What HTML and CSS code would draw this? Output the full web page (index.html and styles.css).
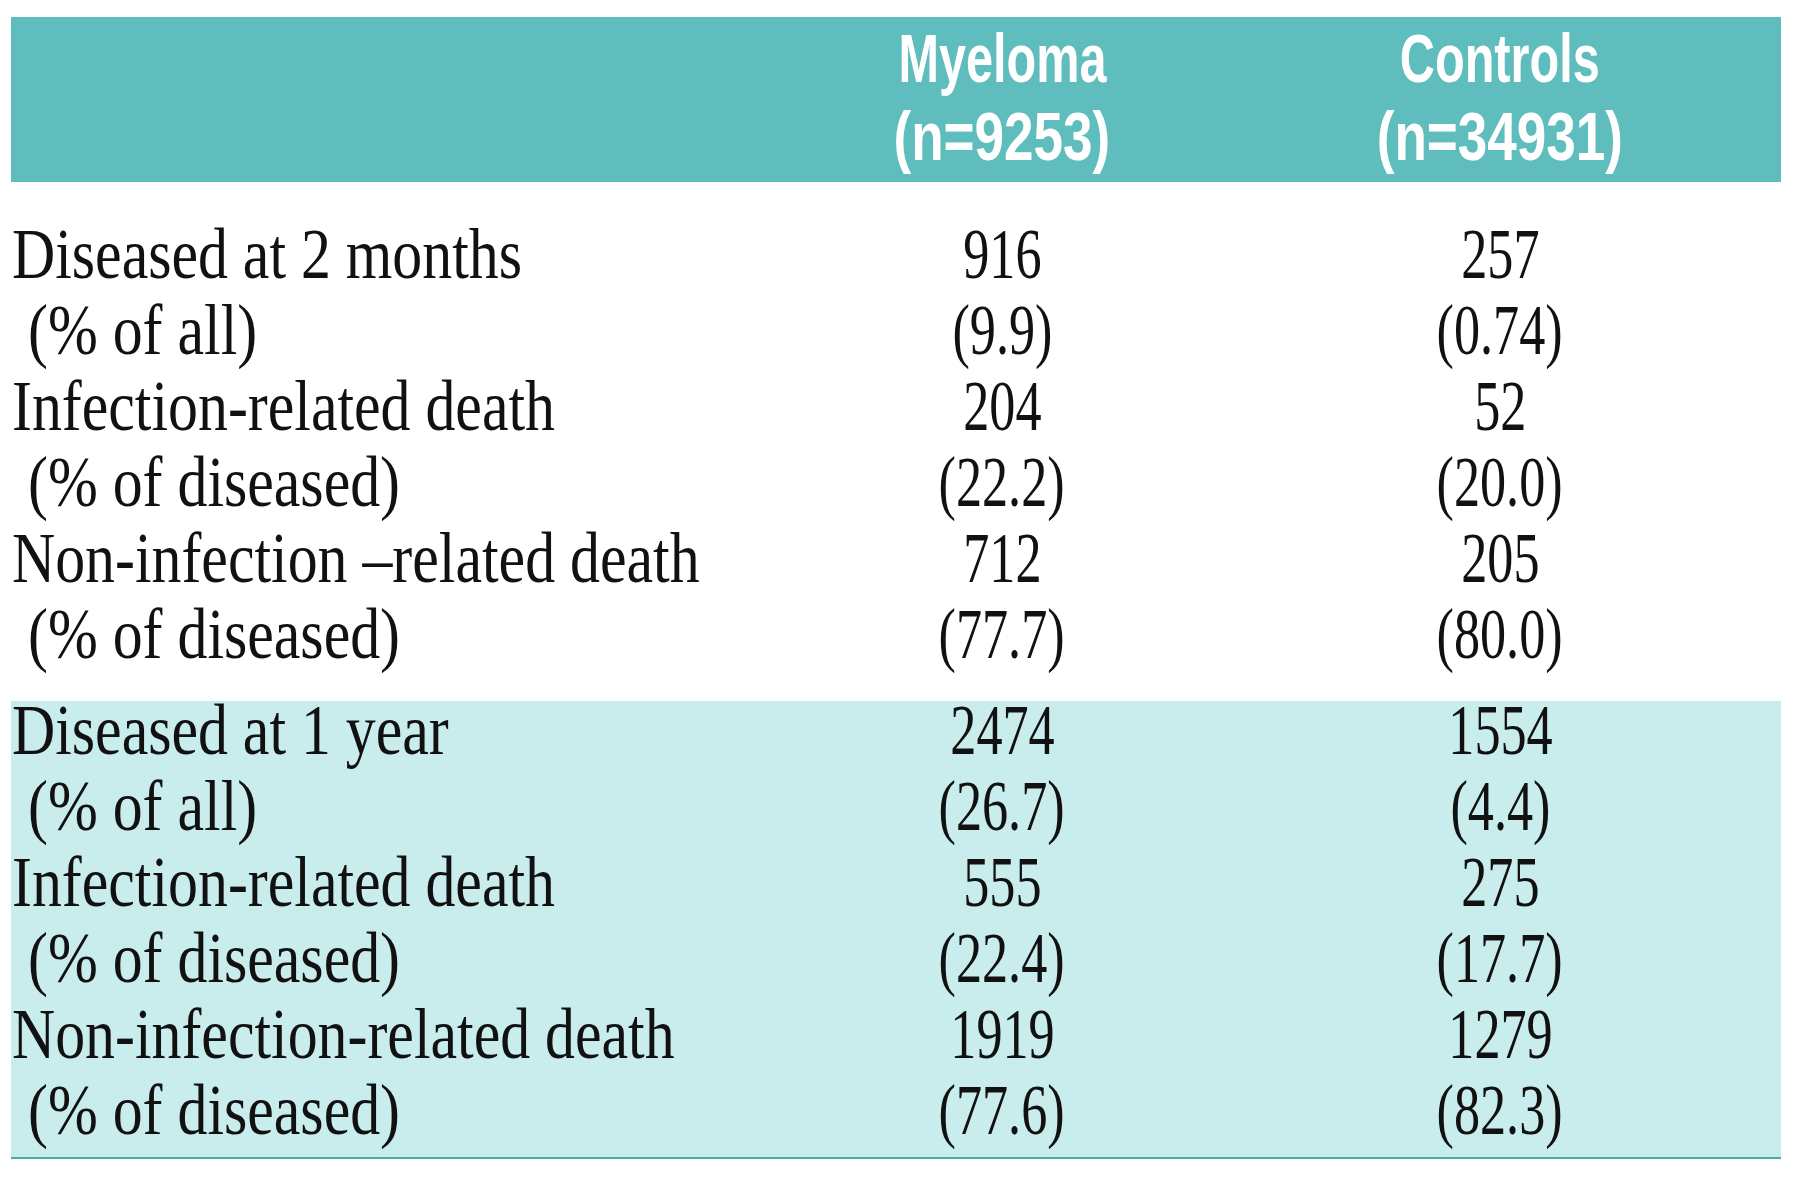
FILE: index.html
```html
<!DOCTYPE html>
<html lang="en">
<head>
<meta charset="utf-8">
<title>Myeloma vs Controls</title>
<link rel="stylesheet" href="styles.css">
</head>
<body>
<div class="table">
  <div class="thead">
    <div class="hcell"></div>
    <div class="hcell">
      <div class="hline"><span class="htext">Myeloma</span></div>
      <div class="hline"><span class="htext count">(n=9253)</span></div>
    </div>
    <div class="hcell">
      <div class="hline"><span class="htext">Controls</span></div>
      <div class="hline"><span class="htext count">(n=34931)</span></div>
    </div>
  </div>

  <div class="section">
    <div class="label"><span class="ltext">Diseased at 2 months</span></div>
    <div class="num"><span class="ntext">916</span></div>
    <div class="num"><span class="ntext">257</span></div>

    <div class="label sub"><span class="ltext">(% of all)</span></div>
    <div class="num"><span class="ntext">(9.9)</span></div>
    <div class="num"><span class="ntext">(0.74)</span></div>

    <div class="label"><span class="ltext">Infection-related death</span></div>
    <div class="num"><span class="ntext">204</span></div>
    <div class="num"><span class="ntext">52</span></div>

    <div class="label sub"><span class="ltext">(% of diseased)</span></div>
    <div class="num"><span class="ntext">(22.2)</span></div>
    <div class="num"><span class="ntext">(20.0)</span></div>

    <div class="label"><span class="ltext">Non-infection –related death</span></div>
    <div class="num"><span class="ntext">712</span></div>
    <div class="num"><span class="ntext">205</span></div>

    <div class="label sub"><span class="ltext">(% of diseased)</span></div>
    <div class="num"><span class="ntext">(77.7)</span></div>
    <div class="num"><span class="ntext">(80.0)</span></div>
  </div>

  <div class="section shaded">
    <div class="label"><span class="ltext">Diseased at 1 year</span></div>
    <div class="num"><span class="ntext">2474</span></div>
    <div class="num"><span class="ntext">1554</span></div>

    <div class="label sub"><span class="ltext">(% of all)</span></div>
    <div class="num"><span class="ntext">(26.7)</span></div>
    <div class="num"><span class="ntext">(4.4)</span></div>

    <div class="label"><span class="ltext">Infection-related death</span></div>
    <div class="num"><span class="ntext">555</span></div>
    <div class="num"><span class="ntext">275</span></div>

    <div class="label sub"><span class="ltext">(% of diseased)</span></div>
    <div class="num"><span class="ntext">(22.4)</span></div>
    <div class="num"><span class="ntext">(17.7)</span></div>

    <div class="label"><span class="ltext">Non-infection-related death</span></div>
    <div class="num"><span class="ntext">1919</span></div>
    <div class="num"><span class="ntext">1279</span></div>

    <div class="label sub"><span class="ltext">(% of diseased)</span></div>
    <div class="num"><span class="ntext">(77.6)</span></div>
    <div class="num"><span class="ntext">(82.3)</span></div>
  </div>
</div>
</body>
</html>
```

FILE: styles.css
```css
html, body {
  margin: 0;
  padding: 0;
  background: #ffffff;
}

.table {
  width: 1770px;
  margin: 17px 0 0 11px;
  color: #111111;
}

.thead {
  display: grid;
  grid-template-columns: 774px 434px 562px;
  height: 165px;
  box-sizing: border-box;
  padding-top: 2px;
  background: #5fbdbd;
}

.hcell {
  text-align: center;
}

.hline {
  font-family: "Liberation Sans", Arial, sans-serif;
  font-weight: 700;
  font-size: 68px;
  line-height: 78px;
  color: #ffffff;
  white-space: nowrap;
}

.htext {
  display: inline-block;
  transform: scaleX(0.715);
}

.htext.count {
  transform: scaleX(0.78);
}

.section {
  display: grid;
  grid-template-columns: 774px 434px 562px;
  grid-auto-rows: 76px;
  margin-top: 43px;
  font-family: "Liberation Serif", "Times New Roman", serif;
  font-size: 72.5px;
  line-height: 57px;
}

.section.shaded {
  margin-top: 20px;
  background: #c9ecec;
  border-bottom: 2px solid #4fa9a6;
}

.label {
  padding-left: 1px;
  white-space: nowrap;
}

.label.sub {
  padding-left: 17px;
}

.ltext {
  display: inline-block;
  transform: scaleX(0.825);
  transform-origin: left center;
}

.num {
  text-align: center;
  white-space: nowrap;
}

.ntext {
  display: inline-block;
  transform: scaleX(0.72);
}
```
